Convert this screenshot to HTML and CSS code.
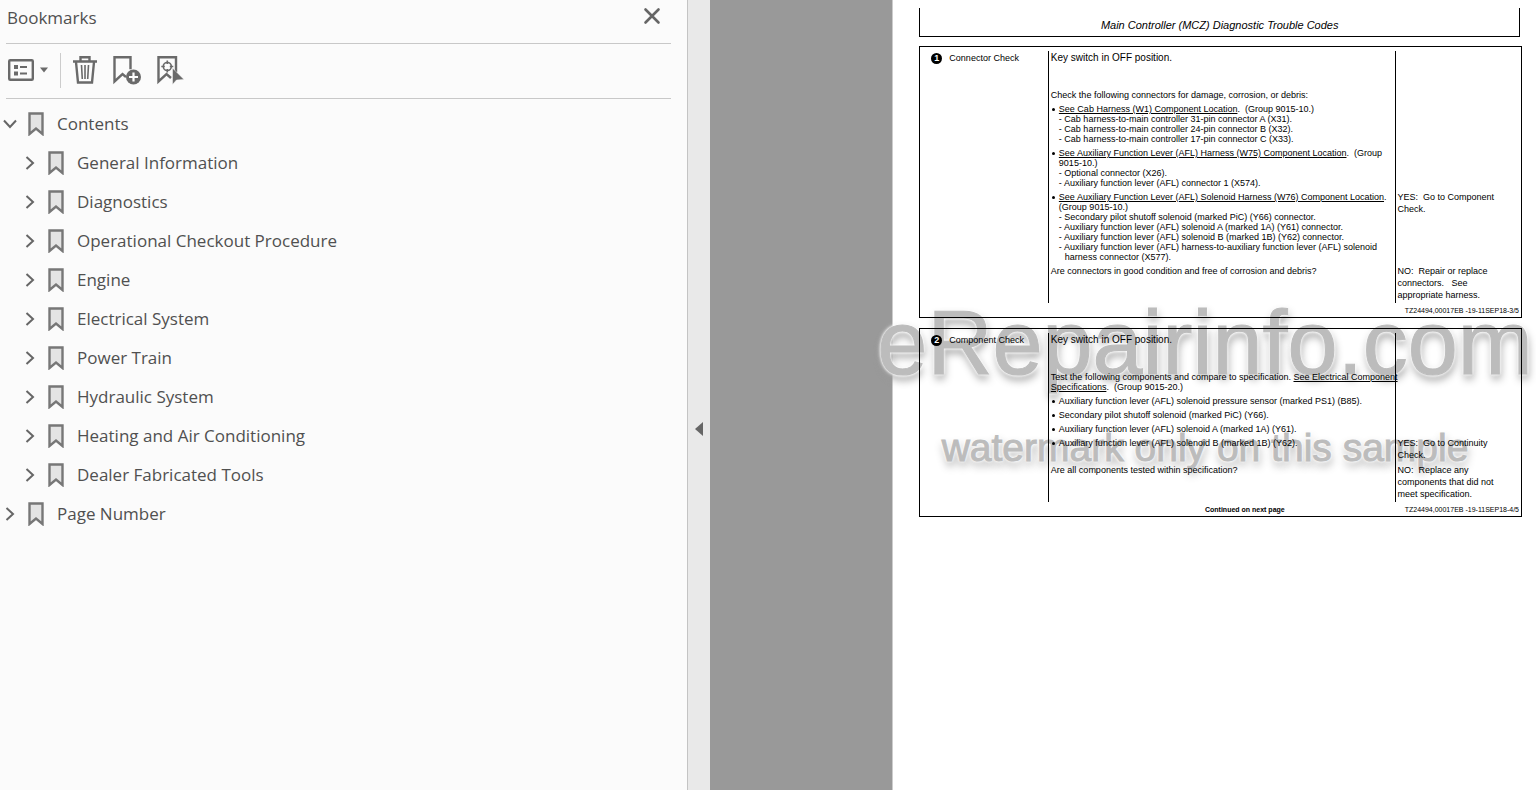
FILE: index.html
```html
<!DOCTYPE html>
<html lang="en">
<head>
    <meta charset="UTF-8">
    <meta name="viewport" content="width=device-width, initial-scale=1.0">
    <title>Main Controller (MCZ) Diagnostic Trouble Codes</title>
    <link rel="stylesheet" href="styles.css">
</head>
<body>
    <svg class="sprite" aria-hidden="true">
        <symbol id="bookmark" viewBox="0 0 16 24">
            <path d="M1.5 1.5h13v20.5L8 16.5 1.5 22z" fill="#e4e4e4" stroke="#777" stroke-width="2.4"/>
        </symbol>
        <symbol id="chevron" viewBox="0 0 16 16">
            <path d="M4.5 2l6.5 6-6.5 6" fill="none" stroke="#666" stroke-width="2"/>
        </symbol>
    </svg>
    <aside class="sidebar">
        <div class="sidebar-header">
            <h1>Bookmarks</h1>
            <button class="close" aria-label="Close">
                <svg width="18" height="18" viewBox="0 0 18 18"><path d="M2.5 2.5l13 13M15.5 2.5l-13 13" fill="none" stroke="#666" stroke-width="2.6" stroke-linecap="round"/></svg>
            </button>
        </div>
        <div class="toolbar">
            <button class="options" aria-label="Options">
                <svg width="40" height="22" viewBox="0 0 40 22">
                    <rect x="1.2" y="1.2" width="23.6" height="19.6" rx="1" fill="none" stroke="#6a6a6a" stroke-width="2.4"/>
                    <path d="M6 6h4v4H6zM6 12.5h4v4H6zM12 7h7v2h-7zM12 13.5h7v2h-7z" fill="#6a6a6a"/>
                    <path d="M32 8.5h8l-4 5z" fill="#6a6a6a"/>
                </svg>
            </button>
            <button aria-label="Delete bookmark">
                <svg width="26" height="30" viewBox="0 0 26 30" fill="none" stroke="#6a6a6a">
                    <path d="M1 6.5h24M8.5 6V2.2h9V6M4 7l2 20.5h14L22 7" stroke-width="2.4"/>
                    <path d="M9.5 10l.8 14M13 10v14M16.5 10l-.8 14" stroke-width="1.6"/>
                </svg>
            </button>
            <button aria-label="Add bookmark">
                <svg width="30" height="30" viewBox="0 0 30 30">
                    <path d="M14 22l-3.5-3-8 7.5V2.2h16v12" fill="none" stroke="#6a6a6a" stroke-width="2.4"/>
                    <circle cx="21.5" cy="22" r="7.5" fill="#6a6a6a"/>
                    <path d="M21.5 17.5v9M17 22h9" stroke="#fff" stroke-width="2.2"/>
                </svg>
            </button>
            <button aria-label="Find current bookmark">
                <svg width="28" height="30" viewBox="0 0 28 30">
                    <path d="M15 23l-4.5-4-8 7.5V2.2h17.5v15" fill="none" stroke="#6a6a6a" stroke-width="2.4"/>
                    <circle cx="11.3" cy="11.5" r="4" fill="none" stroke="#6a6a6a" stroke-width="1.6"/>
                    <path d="M11.3 5.5v3.5M11.3 14v3.5M5.3 11.5h3.5M13.8 11.5h3.5" stroke="#6a6a6a" stroke-width="1.6"/>
                    <path d="M16.5 13v16.5l4-4.500 7.500-.5z" fill="#6a6a6a" stroke="#fbfbfb" stroke-width=".5"/>
                </svg>
            </button>
        </div>
        <nav class="tree">
            <ul>
                <li>
                    <div class="row open"><button aria-label="Collapse"><svg><use href="#chevron"/></svg></button><svg class="mark"><use href="#bookmark"/></svg><a href="#">Contents</a></div>
                    <ul>
                        <li class="row"><button aria-label="Expand"><svg><use href="#chevron"/></svg></button><svg class="mark"><use href="#bookmark"/></svg><a href="#">General Information</a></li>
                        <li class="row"><button aria-label="Expand"><svg><use href="#chevron"/></svg></button><svg class="mark"><use href="#bookmark"/></svg><a href="#">Diagnostics</a></li>
                        <li class="row"><button aria-label="Expand"><svg><use href="#chevron"/></svg></button><svg class="mark"><use href="#bookmark"/></svg><a href="#">Operational Checkout Procedure</a></li>
                        <li class="row"><button aria-label="Expand"><svg><use href="#chevron"/></svg></button><svg class="mark"><use href="#bookmark"/></svg><a href="#">Engine</a></li>
                        <li class="row"><button aria-label="Expand"><svg><use href="#chevron"/></svg></button><svg class="mark"><use href="#bookmark"/></svg><a href="#">Electrical System</a></li>
                        <li class="row"><button aria-label="Expand"><svg><use href="#chevron"/></svg></button><svg class="mark"><use href="#bookmark"/></svg><a href="#">Power Train</a></li>
                        <li class="row"><button aria-label="Expand"><svg><use href="#chevron"/></svg></button><svg class="mark"><use href="#bookmark"/></svg><a href="#">Hydraulic System</a></li>
                        <li class="row"><button aria-label="Expand"><svg><use href="#chevron"/></svg></button><svg class="mark"><use href="#bookmark"/></svg><a href="#">Heating and Air Conditioning</a></li>
                        <li class="row"><button aria-label="Expand"><svg><use href="#chevron"/></svg></button><svg class="mark"><use href="#bookmark"/></svg><a href="#">Dealer Fabricated Tools</a></li>
                    </ul>
                </li>
                <li class="row"><button aria-label="Expand"><svg><use href="#chevron"/></svg></button><svg class="mark"><use href="#bookmark"/></svg><a href="#">Page Number</a></li>
            </ul>
        </nav>
    </aside>
    <button class="splitter" aria-label="Hide bookmarks">
        <svg width="8" height="14" viewBox="0 0 8 14"><path d="M8 0v14L0 7z" fill="#666"/></svg>
    </button>
    <main class="viewer">
        <article class="page">
            <div class="watermark">
                <p class="site">eRepairinfo.com</p>
                <p class="note">watermark only on this sample</p>
            </div>
            <header class="page-title">Main Controller (MCZ) Diagnostic Trouble Codes</header>

            <section class="step">
                <table>
                    <tr>
                        <th rowspan="3"><span class="number">1</span>Connector Check</th>
                        <td>
                            <p class="state">Key switch in OFF position.</p>
                            <p>Check the following connectors for damage, corrosion, or debris:</p>
                            <ul class="bullets">
                                <li><a href="#">See Cab Harness (W1) Component Location</a>.&nbsp; (Group 9015-10.)
                                    <ul>
                                        <li>Cab harness-to-main controller 31-pin connector A (X31).</li>
                                        <li>Cab harness-to-main controller 24-pin connector B (X32).</li>
                                        <li>Cab harness-to-main controller 17-pin connector C (X33).</li>
                                    </ul>
                                </li>
                                <li><a href="#">See Auxiliary Function Lever (AFL) Harness (W75) Component Location</a>.&nbsp; (Group 9015-10.)
                                    <ul>
                                        <li>Optional connector (X26).</li>
                                        <li>Auxiliary function lever (AFL) connector 1 (X574).</li>
                                    </ul>
                                </li>
                            </ul>
                        </td>
                        <td></td>
                    </tr>
                    <tr>
                        <td>
                            <ul class="bullets">
                                <li><a href="#">See Auxiliary Function Lever (AFL) Solenoid Harness (W76) Component Location</a>.<br>(Group 9015-10.)
                                    <ul>
                                        <li>Secondary pilot shutoff solenoid (marked PiC) (Y66) connector.</li>
                                        <li>Auxiliary function lever (AFL) solenoid A (marked 1A) (Y61) connector.</li>
                                        <li>Auxiliary function lever (AFL) solenoid B (marked 1B) (Y62) connector.</li>
                                        <li>Auxiliary function lever (AFL) harness-to-auxiliary function lever (AFL) solenoid harness connector (X577).</li>
                                    </ul>
                                </li>
                            </ul>
                        </td>
                        <td class="answer">YES:&nbsp; Go to Component Check.</td>
                    </tr>
                    <tr>
                        <td>Are connectors in good condition and free of corrosion and debris?</td>
                        <td class="answer">NO:&nbsp; Repair or replace connectors.&nbsp;&nbsp; See appropriate harness.</td>
                    </tr>
                </table>
                <footer><span class="code">TZ24494,00017EB -19-11SEP18-3/5</span></footer>
            </section>

            <section class="step">
                <table>
                    <tr>
                        <th rowspan="3"><span class="number">2</span>Component Check</th>
                        <td>
                            <p class="state">Key switch in OFF position.</p>
                            <p class="intro">Test the following components and compare to specification. <a href="#">See Electrical Component<br>Specifications</a>.&nbsp; (Group 9015-20.)</p>
                            <ul class="bullets">
                                <li>Auxiliary function lever (AFL) solenoid pressure sensor (marked PS1) (B85).</li>
                                <li>Secondary pilot shutoff solenoid (marked PiC) (Y66).</li>
                                <li>Auxiliary function lever (AFL) solenoid A (marked 1A) (Y61).</li>
                            </ul>
                        </td>
                        <td></td>
                    </tr>
                    <tr>
                        <td>
                            <ul class="bullets">
                                <li>Auxiliary function lever (AFL) solenoid B (marked 1B) (Y62).</li>
                            </ul>
                        </td>
                        <td class="answer">YES:&nbsp; Go to Continuity Check.</td>
                    </tr>
                    <tr>
                        <td>Are all components tested within specification?</td>
                        <td class="answer">NO:&nbsp; Replace any components that did not meet specification.</td>
                    </tr>
                </table>
                <footer><span class="next">Continued on next page</span><span class="code">TZ24494,00017EB -19-11SEP18-4/5</span></footer>
            </section>
        </article>
    </main>
</body>
</html>
```

FILE: styles.css
```css
* {
    box-sizing: border-box;
}
body {
    margin: 0;
    display: flex;
    min-height: 100vh;
    background: #999;
    font-family: "Open Sans", "Noto Sans", sans-serif;
    overflow-x: hidden;
}
ul {
    list-style: none;
    margin: 0;
    padding: 0;
}
p {
    margin: 0;
}
button {
    display: flex;
    align-items: center;
    justify-content: center;
    padding: 0;
    border: none;
    background: none;
    cursor: pointer;
}
.sprite {
    display: none;
}

/* bookmarks panel */
.sidebar {
    width: 44.75%;
    padding: 0 16px 0 6px;
    background: #fbfbfb;
    color: #505050;
}
.sidebar-header {
    display: flex;
    align-items: center;
    justify-content: space-between;
    height: 44px;
    padding: 0 10px 8px 1px;
    border-bottom: 1px solid #c8c8c8;
}
.sidebar-header h1 {
    margin: 0;
    font-size: 17px;
    font-weight: normal;
}
.close {
    margin-top: -4px;
}
.toolbar {
    display: flex;
    align-items: center;
    gap: 14px;
    height: 55px;
    padding: 0 2px 2px;
    border-bottom: 1px solid #c8c8c8;
}
.toolbar .options {
    height: 35px;
    padding-right: 12px;
    border-right: 1px solid #ccc;
    margin-right: -3px;
}
.tree {
    padding-top: 5px;
    margin-left: -6px;
}
.tree ul ul {
    padding-left: 20px;
}
.row {
    display: flex;
    align-items: center;
    height: 39px;
}
.row button svg {
    width: 16px;
    height: 16px;
}
.row button {
    width: 20px;
}
.row.open button svg {
    transform: rotate(90deg);
}
.row .mark {
    width: 16px;
    height: 24px;
    margin: 0 13px 0 8px;
}
.row a {
    color: #505050;
    font-size: 17px;
    text-decoration: none;
}
.splitter {
    width: 23px;
    background: #e9e9e9;
    border-left: 1px solid #c4c4c4;
    padding-top: 68px;
}

/* document */
.viewer {
    flex: 1;
    display: flex;
    padding-left: 182px;
}
.page {
    position: relative;
    flex: 1;
    padding: 8px 14px 0 26px;
    background: #fff;
    border-left: 1px solid #ccc;
    color: #000;
    font: 9px/10px "Liberation Sans", Arial, sans-serif;
}
.page a {
    color: #000;
}
.page-title {
    position: relative;
    height: 29px;
    margin: 0 2px 9px 0;
    padding-top: 11px;
    border: solid #000;
    border-width: 0 1px 1px;
    text-align: center;
    font-size: 11px;
    line-height: 13px;
    font-style: italic;
}
.step {
    position: relative;
    padding-top: 4px;
    margin-bottom: 10px;
    border: 1px solid #000;
}
.step table {
    width: 100%;
    table-layout: fixed;
    border-collapse: collapse;
}
.step th, .step td {
    padding: 2px 0 2px 2px;
    vertical-align: top;
    text-align: left;
}
.step td {
    border-left: 1px solid #000;
}
.step th {
    width: 128px;
    padding-left: 11px;
    font-weight: normal;
}
.step td:last-child {
    width: 126px;
}
.number {
    display: inline-block;
    width: 11px;
    height: 11px;
    margin-right: 7px;
    border-radius: 50%;
    background: #000;
    color: #fff;
    font-weight: bold;
    line-height: 11px;
    text-align: center;
}
.state {
    margin-bottom: 27px;
    font-size: 10px;
}
.intro {
    white-space: nowrap;
}
.bullets > li {
    position: relative;
    padding-left: 8px;
}
p + .bullets > li, .bullets > li + li {
    margin-top: 4px;
}
.bullets > li::before {
    content: "";
    position: absolute;
    top: 4px;
    left: 1px;
    width: 3px;
    height: 3px;
    border-radius: 50%;
    background: #000;
}
.bullets ul li {
    padding-left: 6px;
    text-indent: -6px;
}
.bullets ul li::before {
    content: "- ";
}
.step .answer {
    line-height: 12px;
    padding-top: 1px;
    padding-right: 22px;
}
.step footer {
    display: flex;
    justify-content: flex-end;
    padding: 3px 2px 1px;
    font-size: 7px;
}
.next {
    margin-right: 120px;
    font-weight: bold;
}

/* sits under the step text */
.watermark {
    position: absolute;
    top: 298px;
    left: -16px;
    color: #bcbcbc;
    text-align: center;
    white-space: nowrap;
    text-shadow: 0 0 3px #fff, 0 0 3px #fff, 0 0 5px #fff, 1px 5px 9px #999;
}
.site {
    font-size: 90px;
    line-height: 90px;
    -webkit-text-stroke: 1px #bcbcbc;
}
.note {
    margin-top: 40px;
    font-size: 39px;
    line-height: 39px;
    -webkit-text-stroke: 1px #bcbcbc;
}
```
